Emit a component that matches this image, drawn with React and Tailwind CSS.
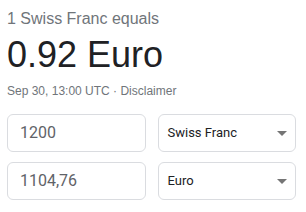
const ROWS = [
  { amount: '1200', currency: 'Swiss Franc' },
  { amount: '1104,76', currency: 'Euro' },
];

function Caret() {
  return (
    <svg width="10" height="5" viewBox="0 0 10 5" className="shrink-0">
      <path d="M0 0h10L5 5z" fill="#757575" />
    </svg>
  );
}

function App() {
  return (
    <div className="h-[212px] w-[306px] overflow-hidden bg-white pl-[7px] pr-[10px] pt-[9px] font-['Liberation_Sans',Arial,sans-serif]">
      <div className="text-[16px] leading-[20px] text-[#70757a]">1 Swiss Franc equals</div>
      <div className="mt-[6px] text-[36px] leading-[40px] text-[#202124]">0.92 Euro</div>
      <div className="mt-[8px] text-[12px] leading-[16px] text-[#70757a]">
        Sep 30, 13:00 UTC · Disclaimer
      </div>

      <div className="mt-[15px] flex flex-col gap-[10px]">
        {ROWS.map((row) => (
          <div key={row.currency} className="grid grid-cols-2 gap-3">
            <div className="flex h-[38px] items-center rounded-md border border-[#dadce0] pl-[12px] font-['Roboto',sans-serif] text-[16px] text-[#5f6368]">
              {row.amount}
            </div>
            <div className="flex h-[38px] items-center justify-between rounded-md border border-[#dadce0] pl-[9px] pr-[8px] font-['Roboto',sans-serif] text-[13px] text-[#202124]">
              <span>{row.currency}</span>
              <Caret />
            </div>
          </div>
        ))}
      </div>
    </div>
  );
}

export default App;
